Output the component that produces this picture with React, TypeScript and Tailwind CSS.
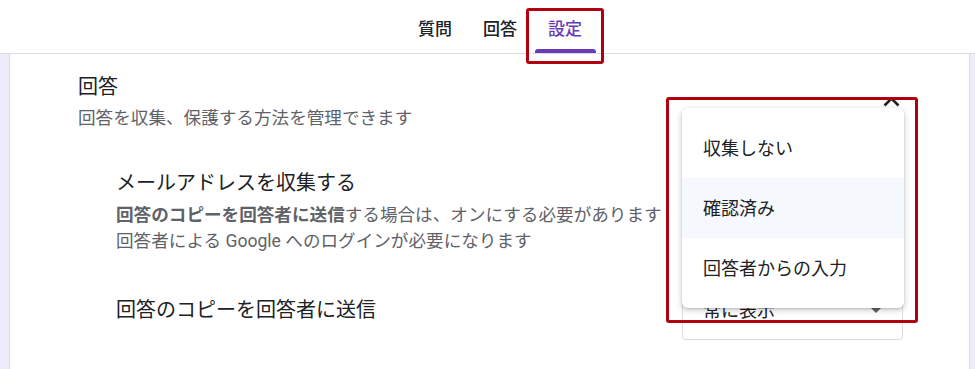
import React from 'react';

const font = { fontFamily: 'Roboto, "Noto Sans CJK JP", sans-serif' };

const tabs = ['質問', '回答', '設定'];

const options = ['収集しない', '確認済み', '回答者からの入力'];

export default function App() {
  return (
    <div className="relative w-[975px] h-[369px] overflow-hidden bg-[#f0ebf8]" style={font}>
      {/* header with tabs */}
      <div className="h-[54px] bg-white border-b border-[#dadce0] flex justify-center pl-[25px]">
        {tabs.map((t, i) => (
          <div key={t} className="relative w-[65px] flex items-center justify-center pt-[7px]">
            <span
              className={`text-[17px] font-medium ${i === 2 ? 'text-[#673ab7]' : 'text-[#202124]'}`}
            >
              {t}
            </span>
            {i === 2 && (
              <div className="absolute bottom-0 left-[2px] right-[2px] h-[4px] rounded-t-[3px] bg-[#673ab7]" />
            )}
          </div>
        ))}
      </div>

      {/* settings card */}
      <div className="ml-[9px] mr-[5px] h-[315px] bg-white border-x border-[#dadce0] pl-[68px] pr-[66px] pt-[19px] text-[#202124]">
        <div className="text-[20px] leading-[28px]">回答</div>
        <div className="mt-[5px] text-[17.6px] leading-[24px] text-[#5f6368]">
          回答を収集、保護する方法を管理できます
        </div>

        <div className="pl-[38px]">
          <div className="mt-[39px] text-[20px] leading-[28px]">メールアドレスを収集する</div>
          <div className="mt-[5px] text-[17.6px] leading-[26px] text-[#5f6368]">
            <div className="whitespace-nowrap">
              <span className="font-bold">回答のコピーを回答者に送信</span>する場合は、オンにする必要があります
            </div>
            <div>回答者による Google へのログインが必要になります</div>
          </div>

          <div className="mt-[26px] flex items-center justify-between">
            <div className="text-[20px] leading-[28px]">回答のコピーを回答者に送信</div>
            <div className="w-[221px] h-[60px] border border-[#dadce0] rounded-[4px] flex items-center justify-between pl-[20px] pr-[21px]">
              <span className="text-[18px] text-[#202124]">常に表示</span>
              <svg width="10" height="5" viewBox="0 0 10 5">
                <path d="M0 0 L5 5 L10 0 Z" fill="#5f6368" />
              </svg>
            </div>
          </div>
        </div>
      </div>

      {/* chevron of the open select */}
      <svg className="absolute left-[883px] top-[96px]" width="17" height="11" viewBox="0 0 17 11">
        <path d="M1.5 9.5 L8.5 2.5 L15.5 9.5" fill="none" stroke="#202124" strokeWidth="2.6" />
      </svg>

      {/* open dropdown menu */}
      <div className="absolute left-[682px] top-[108px] w-[222px] py-[10px] bg-white rounded-[6px] shadow-[0_2px_6px_rgba(0,0,0,0.22),0_1px_2px_rgba(0,0,0,0.12)]">
        {options.map((o, i) => (
          <div
            key={o}
            className={`h-[60px] flex items-center pl-[21px] text-[18px] text-[#202124] ${i === 1 ? 'bg-[#f5f8fd]' : ''}`}
          >
            {o}
          </div>
        ))}
      </div>

      {/* highlight boxes */}
      <div className="absolute left-[526px] top-[8px] w-[78px] h-[56px] border-[3px] border-[#b00010] rounded-[3px]" />
      <div className="absolute left-[666px] top-[97px] w-[252px] h-[226px] border-[3px] border-[#b00010] rounded-[3px]" />
    </div>
  );
}
